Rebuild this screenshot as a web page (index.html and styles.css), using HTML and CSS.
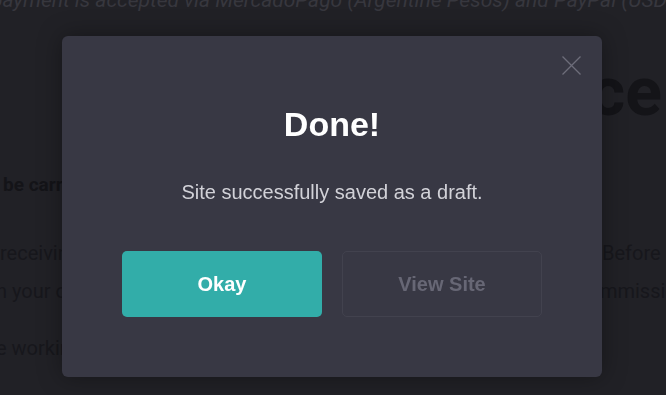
FILE: index.html
```html
<!DOCTYPE html>
<html lang="en">
<head>
<meta charset="utf-8">
<title>Done!</title>
<link rel="stylesheet" href="styles.css">
</head>
<body>
  <main class="page">
    <p class="lead">payment is accepted via MercadoPago (Argentine Pesos) and PayPal (USD).</p>
    <h1 class="heading">Experience</h1>
    <p class="strong">be carried out</p>
    <div class="row">
      <span class="frag">receiving the files</span>
      <span class="frag right">Before</span>
    </div>
    <div class="row row2">
      <span class="frag cut">n your order</span>
      <span class="frag right wide">commission</span>
    </div>
    <div class="row row3">
      <span class="frag cut">e working days</span>
    </div>
  </main>

  <div class="overlay">
    <section class="modal" role="dialog" aria-labelledby="modal-title">
      <button class="close" aria-label="Close">
        <svg width="19" height="19" viewBox="0 0 19 19" fill="none" stroke="currentColor" stroke-width="1.3">
          <path d="M0.5 0.5 L18.5 18.5 M18.5 0.5 L0.5 18.5"/>
        </svg>
      </button>
      <h2 class="title" id="modal-title">Done!</h2>
      <p class="message">Site successfully saved as a draft.</p>
      <div class="actions">
        <button class="btn btn-primary">Okay</button>
        <button class="btn btn-ghost">View Site</button>
      </div>
    </section>
  </div>
</body>
</html>
```

FILE: styles.css
```css
* { box-sizing: border-box; }

html, body {
  margin: 0;
  padding: 0;
}

body {
  width: 666px;
  height: 395px;
  overflow: hidden;
  background: #212126;
  font-family: Roboto, "Liberation Sans", Arial, sans-serif;
  color: #141418;
}

.page {
  display: flex;
  flex-direction: column;
}

.lead {
  margin: -11px 0 0 -9px;
  font-size: 21px;
  line-height: 22px;
  font-style: italic;
  white-space: nowrap;
  color: #37373e;
}

.heading {
  margin: 47px 0 0 0;
  padding-right: 4px;
  font-size: 68px;
  line-height: 68px;
  font-weight: 700;
  text-align: right;
  white-space: nowrap;
  color: #141418;
}

.strong {
  margin: 47px 0 0 0;
  padding-left: 3px;
  font-size: 19px;
  line-height: 24px;
  font-weight: 700;
  color: #141418;
}

.row {
  display: grid;
  grid-template-columns: 1fr 64px;
  margin-top: 44px;
  font-size: 20px;
  line-height: 24px;
  white-space: nowrap;
  color: #17171c;
}

.row2 {
  margin-top: 14px;
  grid-template-columns: 1fr 88px;
}

.row3 {
  margin-top: 33px;
}

.cut { margin-left: -4px; }

.right { overflow: visible; }

.overlay {
  position: fixed;
  inset: 0;
  display: flex;
  justify-content: center;
  align-items: flex-start;
  padding: 36px 2px 0 0;
}

.modal {
  position: relative;
  width: 540px;
  padding: 68px 0 60px;
  background: #383844;
  border-radius: 6px;
  box-shadow: 0 0 24px rgba(0, 0, 0, 0.35);
  display: flex;
  flex-direction: column;
  align-items: center;
  font-family: "Liberation Sans", Arial, sans-serif;
}

.close {
  position: absolute;
  top: 20px;
  right: 21px;
  width: 19px;
  height: 19px;
  padding: 0;
  border: 0;
  background: none;
  color: #6d6d7a;
  display: flex;
}

.title {
  margin: 0;
  font-size: 34px;
  line-height: 40px;
  font-weight: 700;
  color: #ffffff;
}

.message {
  margin: 36px 0 0;
  font-size: 20px;
  line-height: 24px;
  color: #d2d2d8;
}

.actions {
  margin-top: 47px;
  display: flex;
  gap: 20px;
}

.btn {
  width: 200px;
  height: 66px;
  border-radius: 5px;
  font-family: "Liberation Sans", Arial, sans-serif;
  font-size: 20px;
  font-weight: 700;
  cursor: pointer;
}

.btn-primary {
  background: #32ada9;
  border: 0;
  color: #ffffff;
}

.btn-ghost {
  background: transparent;
  border: 1px solid #42424e;
  color: #676775;
}
```
